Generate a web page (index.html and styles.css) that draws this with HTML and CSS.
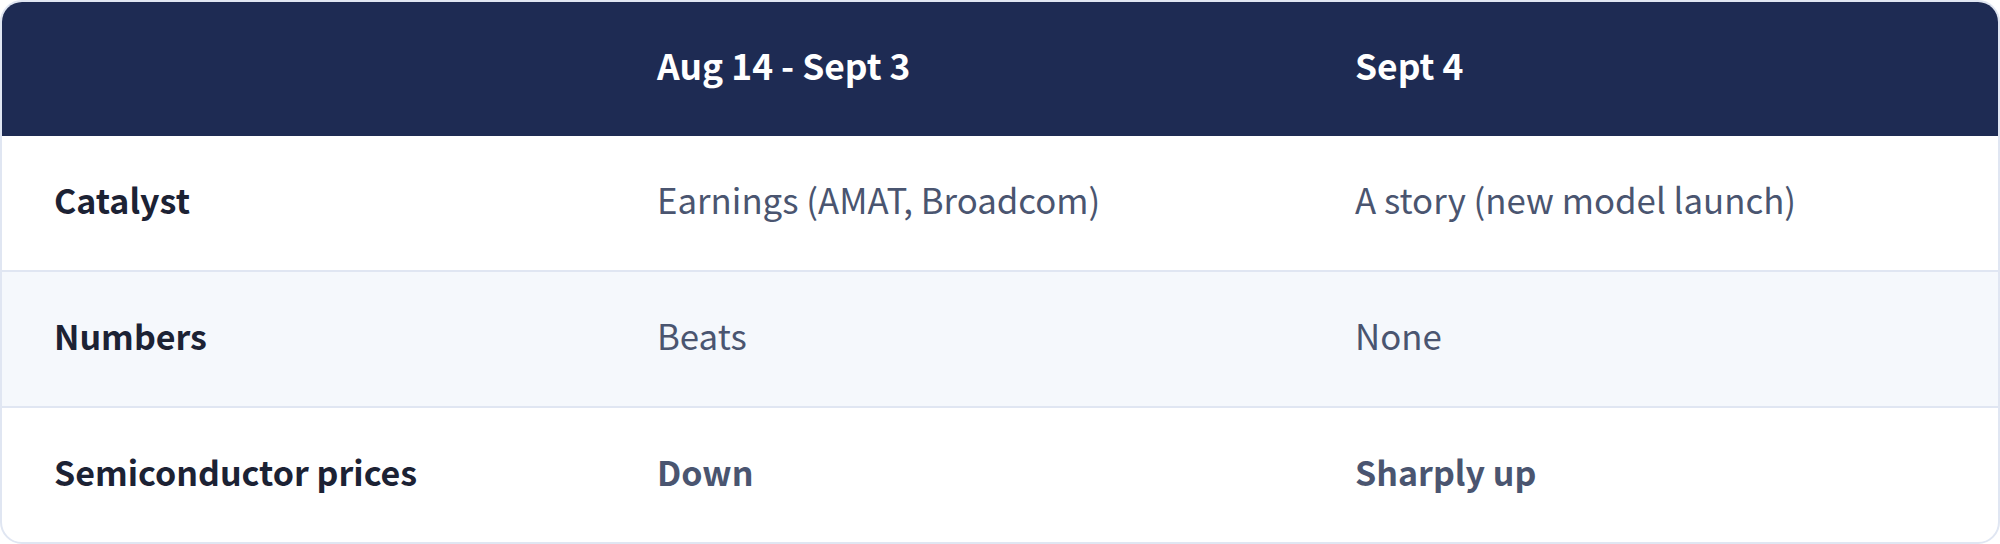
FILE: index.html
```html
<!DOCTYPE html>
<html lang="en">
<head>
<meta charset="utf-8">
<title>Comparison</title>
<link rel="stylesheet" href="styles.css">
</head>
<body>
<div class="card">
  <div class="row head">
    <div class="cell"></div>
    <div class="cell">Aug 14 - Sept 3</div>
    <div class="cell">Sept 4</div>
  </div>
  <div class="row">
    <div class="cell label">Catalyst</div>
    <div class="cell val">Earnings (AMAT, Broadcom)</div>
    <div class="cell val">A story (new model launch)</div>
  </div>
  <div class="row alt">
    <div class="cell label">Numbers</div>
    <div class="cell val">Beats</div>
    <div class="cell val">None</div>
  </div>
  <div class="row last">
    <div class="cell label">Semiconductor prices</div>
    <div class="cell val strong">Down</div>
    <div class="cell val strong">Sharply up</div>
  </div>
</div>
</body>
</html>
```
FILE: styles.css
```css
html, body {
  margin: 0;
  padding: 0;
  background: #ffffff;
}
body {
  font-family: "Noto Sans CJK KR", "Noto Sans", sans-serif;
}
.card {
  width: 2000px;
  height: 544px;
  box-sizing: border-box;
  border: 2px solid #e0e6f2;
  border-radius: 22px;
  overflow: hidden;
  background: #ffffff;
}
.row {
  display: grid;
  grid-template-columns: 603px 698px 1fr;
  height: 134px;
  border-bottom: 2px solid #e0e6f2;
}
.row.last {
  border-bottom: none;
}
.row.alt {
  background: #f5f8fc;
}
.row.head {
  background: #1e2b53;
  color: #ffffff;
  font-weight: 700;
  font-size: 35.4px;
  border-bottom: none;
}
.row.head .cell {
  padding-bottom: 10px;
}
.cell {
  display: flex;
  align-items: center;
  padding-left: 52px;
  padding-bottom: 8px;
  box-sizing: border-box;
}
.label {
  font-weight: 700;
  font-size: 34px;
  color: #1c2234;
}
.val {
  font-size: 34.8px;
  color: #4a5570;
}
.val.strong {
  font-weight: 700;
  font-size: 34px;
}
```
